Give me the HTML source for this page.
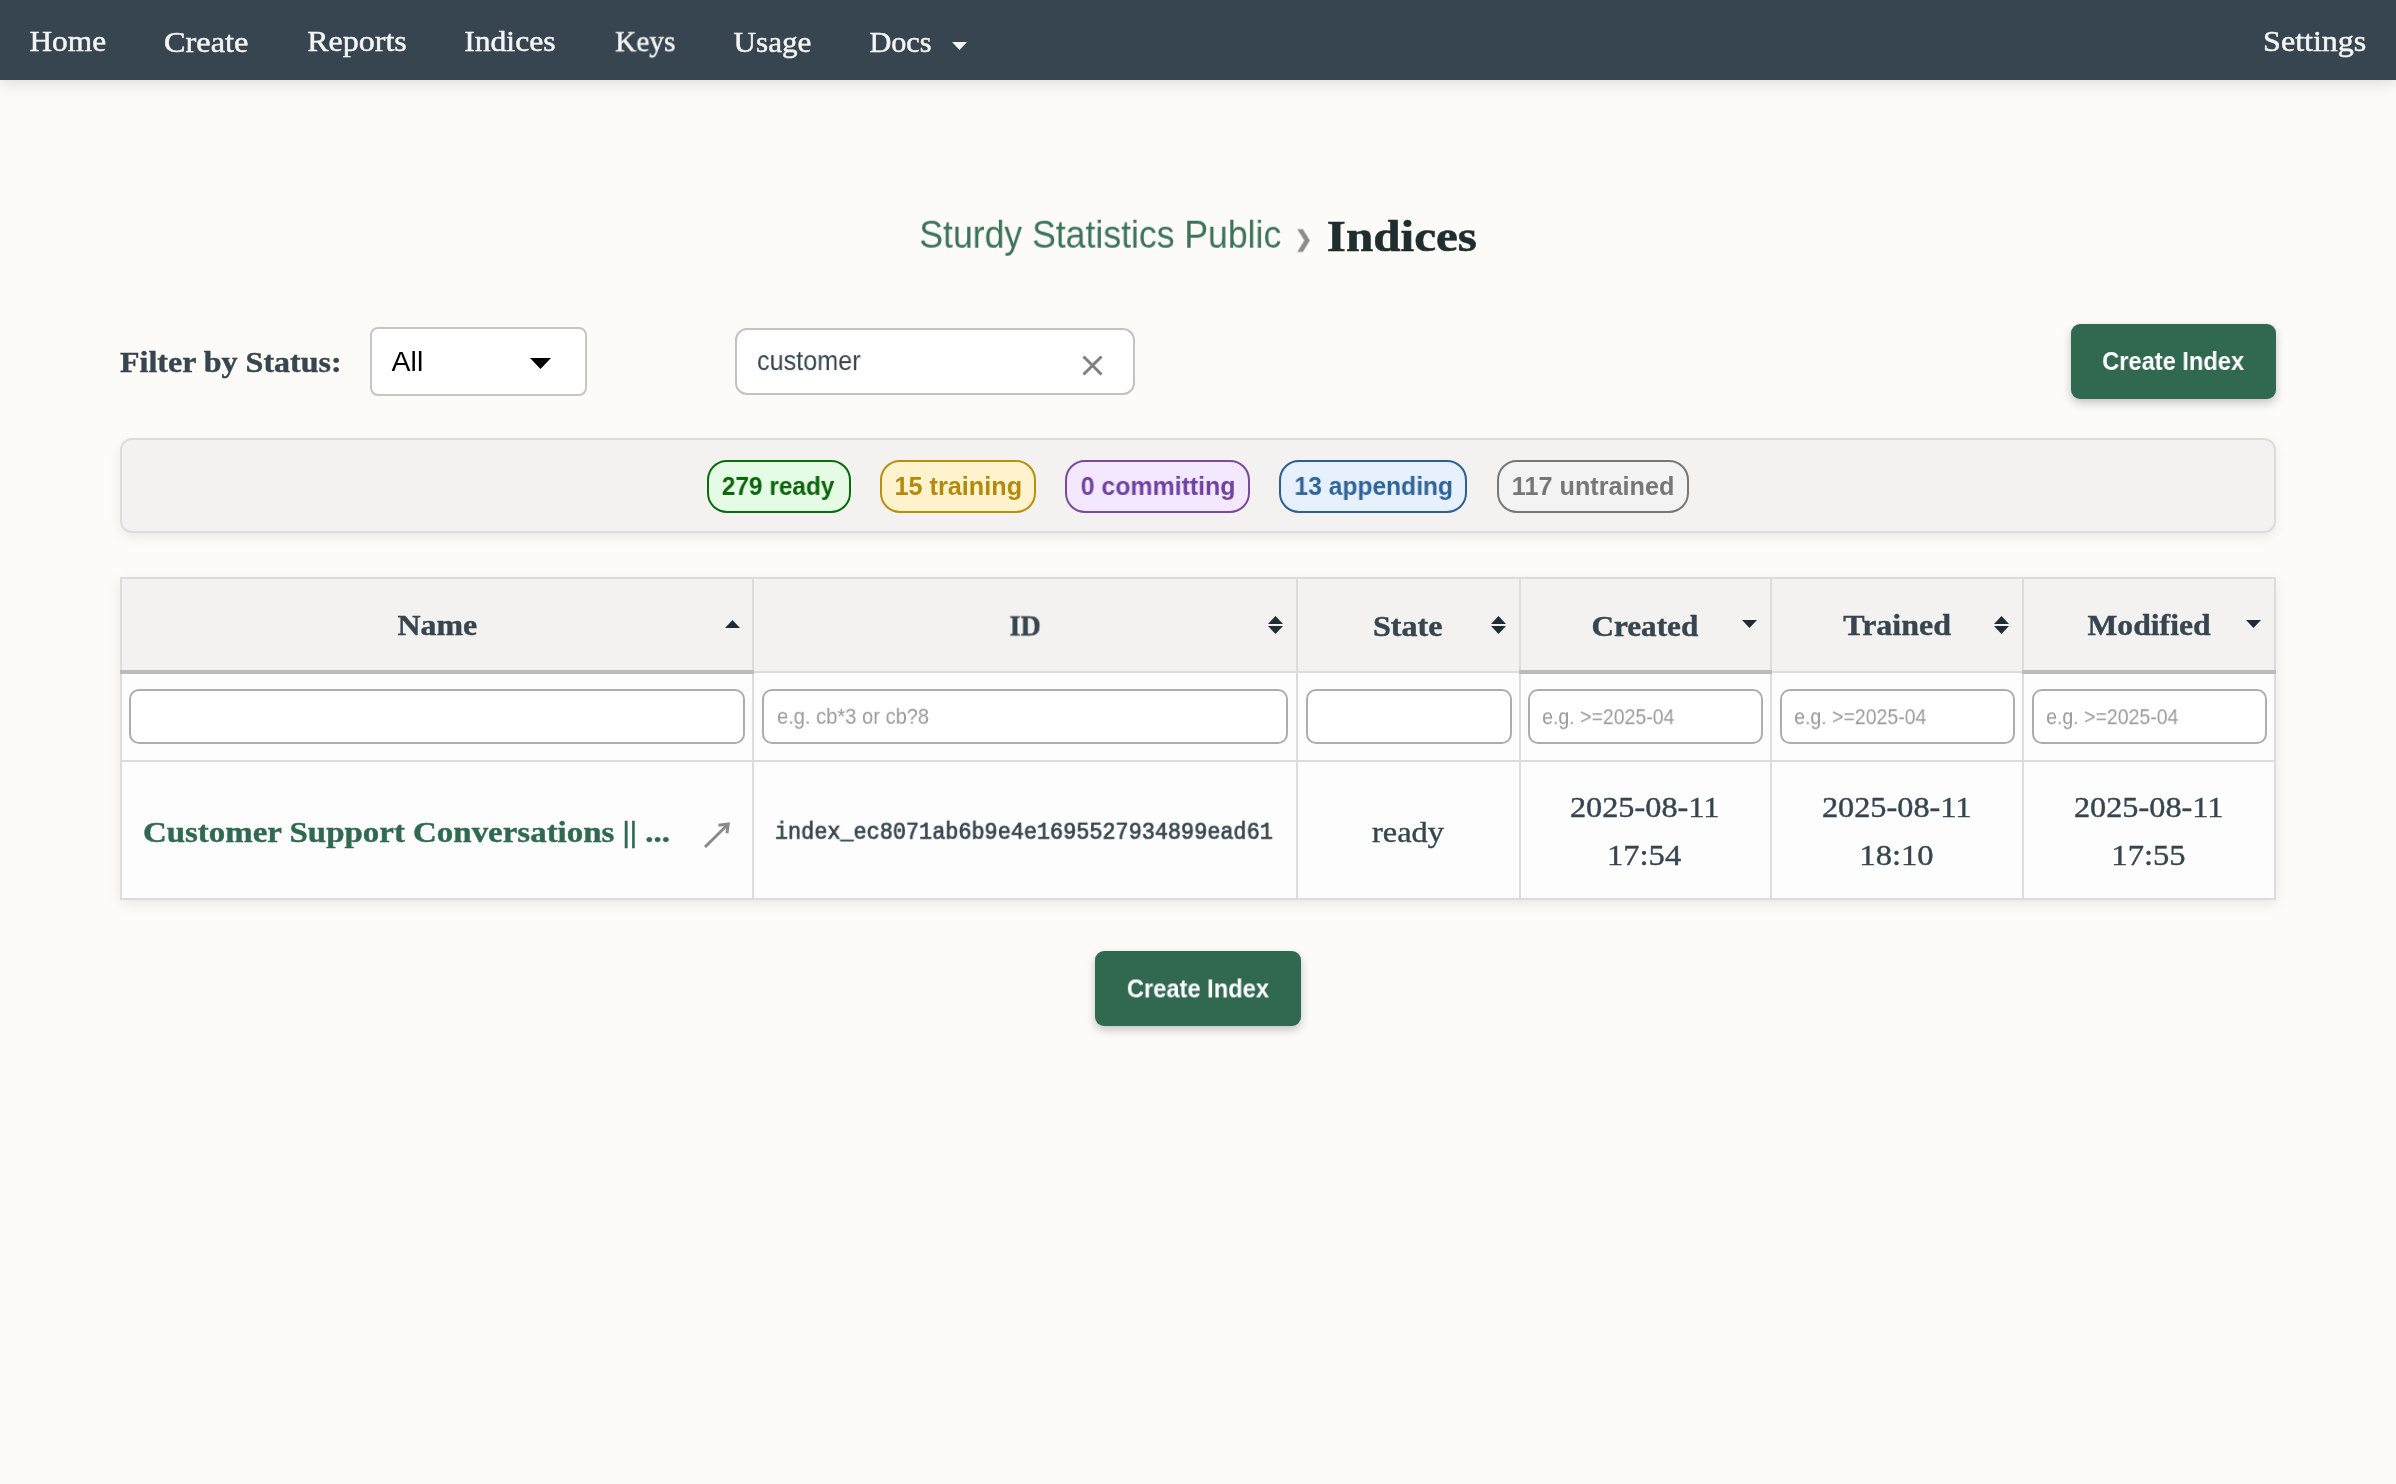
<!DOCTYPE html>
<html lang="en">
<head>
<meta charset="utf-8">
<title>Indices - Sturdy Statistics</title>
<style>
*{box-sizing:border-box;margin:0;padding:0}
html,body{width:2396px;height:1484px;overflow:hidden}
body{background:#fcfbf7;font-family:"Liberation Serif",serif;color:#36454f;position:relative}
.t{display:inline-block;white-space:nowrap;transform-origin:0 50%;will-change:transform}
.c{transform-origin:50% 50%}

/* NAV */
.nav{position:absolute;left:0;top:0;width:2396px;height:80px;background:#36454f;box-shadow:0 4px 14px rgba(0,0,0,.12)}
.nav a{position:absolute;top:0;height:80px;line-height:84px;font-size:30px;color:#f5f5f5;text-decoration:none;white-space:nowrap;transform-origin:0 50%;will-change:transform;-webkit-text-stroke:.5px #f5f5f5}
.nav svg{position:absolute;left:952px;top:42px}

/* BREADCRUMB */
.crumbs{position:absolute;left:0;top:190px;width:2396px;height:90px;font-weight:normal}
.crumbs .org{position:absolute;left:919px;top:10px;font-family:"Liberation Sans",sans-serif;font-size:38px;line-height:60px;color:#3b7359;text-decoration:none}
.crumbs .sep{position:absolute;left:1297px;top:16px;font-family:"DejaVu Sans",sans-serif;font-weight:bold;font-size:22px;line-height:50px;color:#8c8c8c;-webkit-text-stroke:.8px #8c8c8c}
.crumbs .cur{position:absolute;left:1327px;top:8px;font-size:45px;font-weight:bold;line-height:70px;color:#1f2d2e;-webkit-text-stroke:.6px #1f2d2e}

/* FILTER ROW */
.flabel{position:absolute;left:120px;top:340px;font-size:30px;font-weight:bold;line-height:50px;color:#36454f;-webkit-text-stroke:.4px #36454f}
.select{position:absolute;left:370px;top:327px;width:217px;height:69px;background:#fff;border:2px solid #c6c6c6;border-radius:8px}
.select .t{position:absolute;left:20px;top:10px;font-family:"Liberation Sans",sans-serif;font-size:27px;line-height:44px;color:#000}
.select svg{position:absolute;left:158px;top:29px}
.search{position:absolute;left:735px;top:328px;width:400px;height:67px;background:#fff;border:2px solid #c2c2c2;border-radius:12px}
.search .t{position:absolute;left:20px;top:9px;font-family:"Liberation Sans",sans-serif;font-size:27px;line-height:44px;color:#36454f}
.search svg{position:absolute;left:344.5px;top:24.5px}
.btn{position:absolute;width:205px;height:75px;background:#316850;border-radius:9px;box-shadow:0 4px 10px rgba(0,0,0,.22);color:#fff;font-family:"Liberation Sans",sans-serif;font-weight:bold;font-size:25px;line-height:75px;text-align:center;border:0}
.btn .t{transform-origin:50% 50%}

/* STATUS PANEL */
.status{position:absolute;left:120px;top:438px;width:2156px;height:95px;background:#f4f2f0;border:2px solid #dcdcdc;border-radius:12px;box-shadow:0 4px 12px rgba(0,0,0,.07)}
.badge{position:absolute;top:20px;height:53px;border:2px solid;border-radius:20px;font-family:"Liberation Sans",sans-serif;font-weight:bold;font-size:25px;line-height:49px;text-align:center}
.badge .t{transform-origin:50% 50%}
.b1{left:585px;width:144px;border-color:#0b6b0b;background:#e6fbe6;color:#0b640b}
.b2{left:758px;width:156px;border-color:#b8900b;background:#fff3cd;color:#b38a0b}
.b3{left:943px;width:185px;border-color:#7a4aa0;background:#f3e8ff;color:#6f42a0}
.b4{left:1157px;width:188px;border-color:#2b5f96;background:#e6f1fd;color:#2f6398}
.b5{left:1375px;width:192px;border-color:#777;background:#f3f3f3;color:#777}

/* TABLE */
table{position:absolute;left:120px;top:577px;width:2156px;border-collapse:collapse;table-layout:fixed;box-shadow:0 4px 12px rgba(0,0,0,.08);background:#fdfdfd}
th,td{border:2px solid #dcdcdc;padding:0;text-align:center;vertical-align:middle;position:relative}
th{height:94px;background:#f4f2f0;font-size:30px;font-weight:bold;color:#36454f;-webkit-text-stroke:.4px #36454f}
th.sorted{border-bottom:4px solid #bbb}
th svg{position:absolute;right:13.5px}
tr.filters td{height:89px}
tr.filters .inp{position:absolute;top:15px;height:55px;background:#fff;border:2px solid #adadad;border-radius:10px;text-align:left;font-family:"Liberation Sans",sans-serif;font-size:22px;line-height:51px;color:#9a9a9a;padding-left:14px;overflow:hidden}
tr.data td{height:138px;font-size:30px;line-height:48px;color:#36454f;-webkit-text-stroke:.4px #36454f}
td.name{text-align:left}
td.name a{position:absolute;left:23px;top:44px;font-weight:bold;font-size:30px;line-height:50px;color:#2f6a50;text-decoration:none;-webkit-text-stroke:.4px #2f6a50}
td.name svg{position:absolute;left:581px;top:59.5px}
td.id .t{font-family:"Liberation Mono",monospace;font-size:23px;color:#36454f;-webkit-text-stroke:.7px #36454f}
@media (max-width:1400px){html{zoom:.5}}
/*TUNE-START*/
#n1{transform:translate(-0.5px,-0.8px) scaleX(1.0438)}
#n2{transform:translate(-1.0px,-0.2px) scaleX(1.0779)}
#n3{transform:translate(-0.7px,-0.8px) scaleX(1.0657)}
#n4{transform:translate(-0.8px,-0.8px) scaleX(1.0546)}
#n5{transform:translate(0.1px,-0.8px) scaleX(0.9780)}
#n6{transform:translate(-0.4px,-0.2px) scaleX(1.0379)}
#n7{transform:translate(-0.6px,-0.2px) scaleX(1.0075)}
#n8{transform:translate(-1.9px,-0.8px) scaleX(1.0677)}
#org{transform:translate(0.3px,4.7px) scaleX(0.9365)}
#sep{transform:translate(-2.2px,8.4px) scaleX(0.9509)}
#cur{transform:translate(-0.2px,3.0px) scaleX(1.0908)}
#fl{transform:translate(0.0px,-2.6px) scaleX(1.0667)}
#all{transform:translate(-0.4px,0.8px) scaleX(1.0546)}
#cust{transform:translate(0.0px,0.1px) scaleX(0.9332)}
#bt1{transform:translate(0.1px,0.0px) scaleX(0.9455)}
#bt2{transform:translate(-0.1px,0.4px) scaleX(0.9468)}
#bg1{transform:translate(-0.6px,-0.1px) scaleX(0.9760)}
#bg2{transform:translate(0.1px,-0.1px) scaleX(1.0092)}
#bg3{transform:translate(0.3px,-0.1px) scaleX(0.9949)}
#bg4{transform:translate(1.2px,-0.1px) scaleX(0.9845)}
#bg5{transform:translate(0.5px,-0.1px) scaleX(1.0085)}
#h1{transform:translate(-0.1px,0.4px) scaleX(1.0632)}
#h2{transform:translate(0.4px,0.4px) scaleX(0.9387)}
#h3{transform:translate(-0.8px,1.0px) scaleX(1.0714)}
#h4{transform:translate(-0.5px,1.0px) scaleX(1.0405)}
#h5{transform:translate(0.5px,0.4px) scaleX(1.0650)}
#h6{transform:translate(-0.3px,0.4px) scaleX(1.0558)}
#p2{transform:translate(-1.0px,-0.2px) scaleX(0.9143)}
#p4{transform:translate(-1.8px,0.2px) scaleX(0.8855)}
#p5{transform:translate(-1.8px,0.2px) scaleX(0.8851)}
#p6{transform:translate(-1.8px,0.2px) scaleX(0.8855)}
#nm{transform:translate(-2.1px,0.5px) scaleX(1.0977)}
#idt{transform:translate(-1.4px,0.8px) scaleX(0.9492)}
#st{transform:translate(-0.3px,2.1px) scaleX(1.0787)}
#d1a{transform:translate(-0.8px,0.6px) scaleX(1.0766)}
#d1b{transform:translate(-1.1px,1.1px) scaleX(1.0860)}
#d2a{transform:translate(-0.8px,0.6px) scaleX(1.0766)}
#d2b{transform:translate(-0.7px,1.1px) scaleX(1.0860)}
#d3a{transform:translate(-0.8px,0.6px) scaleX(1.0766)}
#d3b{transform:translate(-0.7px,1.1px) scaleX(1.0860)}
/*TUNE-END*/
</style>
</head>
<body>

<nav class="nav">
  <a id="n1" href="#" style="left:30px">Home</a>
  <a id="n2" href="#" style="left:165px">Create</a>
  <a id="n3" href="#" style="left:308px">Reports</a>
  <a id="n4" href="#" style="left:465px">Indices</a>
  <a id="n5" href="#" style="left:615px">Keys</a>
  <a id="n6" href="#" style="left:734px">Usage</a>
  <a id="n7" href="#" style="left:870px">Docs</a>
  <svg width="15" height="8" viewBox="0 0 15 8"><path d="M0 0H15L7.5 8Z" fill="#f5f5f5"/></svg>
  <a id="n8" href="#" style="left:2265px">Settings</a>
</nav>

<h1 class="crumbs">
  <a id="org" href="#" class="org t">Sturdy Statistics Public</a>
  <span id="sep" class="sep t">&#x276F;</span>
  <span id="cur" class="cur t">Indices</span>
</h1>

<label id="fl" class="flabel t">Filter by Status:</label>
<div class="select"><span id="all" class="t">All</span>
  <svg width="21" height="11" viewBox="0 0 21 11"><path d="M0 0H21L10.5 11Z" fill="#000"/></svg>
</div>
<div class="search"><span id="cust" class="t">customer</span>
  <svg width="21" height="21" viewBox="0 0 21 21"><path d="M1.5 1.5L19.5 19.5M19.5 1.5L1.5 19.5" stroke="#808080" stroke-width="3" fill="none"/></svg>
</div>
<button class="btn" style="left:2071px;top:324px"><span id="bt1" class="t">Create Index</span></button>

<div class="status">
  <span class="badge b1"><span id="bg1" class="t">279 ready</span></span>
  <span class="badge b2"><span id="bg2" class="t">15 training</span></span>
  <span class="badge b3"><span id="bg3" class="t">0 committing</span></span>
  <span class="badge b4"><span id="bg4" class="t">13 appending</span></span>
  <span class="badge b5"><span id="bg5" class="t">117 untrained</span></span>
</div>

<table>
  <colgroup><col style="width:632px"><col style="width:544px"><col style="width:223px"><col style="width:251px"><col style="width:252px"><col style="width:252px"></colgroup>
  <thead>
  <tr>
    <th class="sorted"><span id="h1" class="t c">Name</span><svg style="top:41px;right:12px" width="15" height="8" viewBox="0 0 15 8"><path d="M0 8H15L7.5 0Z" fill="#1f2d33"/></svg></th>
    <th><span id="h2" class="t c">ID</span><svg style="top:36.5px" width="15" height="18" viewBox="0 0 15 18"><path d="M0 8H15L7.5 0ZM0 10H15L7.5 18Z" fill="#1f2d33"/></svg></th>
    <th><span id="h3" class="t c">State</span><svg style="top:36.5px" width="15" height="18" viewBox="0 0 15 18"><path d="M0 8H15L7.5 0ZM0 10H15L7.5 18Z" fill="#1f2d33"/></svg></th>
    <th class="sorted"><span id="h4" class="t c">Created</span><svg style="top:41px" width="15" height="8" viewBox="0 0 15 8"><path d="M0 0H15L7.5 8Z" fill="#1f2d33"/></svg></th>
    <th><span id="h5" class="t c">Trained</span><svg style="top:36.5px" width="15" height="18" viewBox="0 0 15 18"><path d="M0 8H15L7.5 0ZM0 10H15L7.5 18Z" fill="#1f2d33"/></svg></th>
    <th class="sorted"><span id="h6" class="t c">Modified</span><svg style="top:41px" width="15" height="8" viewBox="0 0 15 8"><path d="M0 0H15L7.5 8Z" fill="#1f2d33"/></svg></th>
  </tr>
  </thead>
  <tbody>
  <tr class="filters">
    <td><span class="inp" style="left:7px;width:616px"></span></td>
    <td><span class="inp" style="left:8px;top:16px;width:526px"><span id="p2" class="t">e.g. cb*3 or cb?8</span></span></td>
    <td><span class="inp" style="left:8px;top:16px;width:206px"></span></td>
    <td><span class="inp" style="left:7px;width:235px"><span id="p4" class="t">e.g. &gt;=2025-04</span></span></td>
    <td><span class="inp" style="left:8px;top:16px;width:235px"><span id="p5" class="t">e.g. &gt;=2025-04</span></span></td>
    <td><span class="inp" style="left:8px;width:235px"><span id="p6" class="t">e.g. &gt;=2025-04</span></span></td>
  </tr>
  <tr class="data">
    <td class="name"><a id="nm" href="#" class="t">Customer Support Conversations || ...</a>
      <svg width="28" height="28" viewBox="0 0 28 28"><path d="M2 25L24.5 2.7M15.5 3.3L25.2 2L24 11.3" stroke="#8a8a8a" stroke-width="3" fill="none"/></svg></td>
    <td class="id"><span id="idt" class="t c">index_ec8071ab6b9e4e1695527934899ead61</span></td>
    <td><span id="st" class="t c">ready</span></td>
    <td><span id="d1a" class="t c">2025-08-11</span><br><span id="d1b" class="t c">17:54</span></td>
    <td><span id="d2a" class="t c">2025-08-11</span><br><span id="d2b" class="t c">18:10</span></td>
    <td><span id="d3a" class="t c">2025-08-11</span><br><span id="d3b" class="t c">17:55</span></td>
  </tr>
  </tbody>
</table>

<button class="btn" style="left:1095px;top:951px;width:206px"><span id="bt2" class="t">Create Index</span></button>

</body>
</html>
